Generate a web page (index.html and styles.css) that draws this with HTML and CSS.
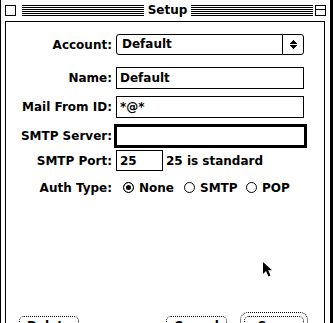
FILE: index.html
```html
<!DOCTYPE html>
<html lang="en">
<head>
    <meta charset="UTF-8">
    <meta name="viewport" content="width=device-width, initial-scale=1.0">
    <title>Setup</title>
    <link rel="stylesheet" href="styles.css">
</head>
<body>
<div class="window">
    <div class="titlebar">
        <span class="closebox"></span>
        <span class="stripes stripes-left"></span>
        <span class="title">Setup</span>
        <span class="stripes"></span>
        <svg class="zoombox" width="11" height="11" viewBox="0 0 11 11">
            <rect x="0.5" y="0.5" width="10" height="10" fill="#fff" stroke="#000"/>
            <line x1="0" y1="4.5" x2="11" y2="4.5" stroke="#000"/>
        </svg>
    </div>

    <div class="frame">
        <form class="setup">
            <div class="row row-account">
                <label class="lbl">Account:</label>
                <div class="popup">
                    <span class="popup-value">Default</span>
                    <span class="popup-arrows">
                        <svg width="7" height="9" viewBox="0 0 7 9">
                            <path d="M3 0h1v1h1v1h1v1h1v1H0V3h1V2h1V1h1z" fill="#000"/>
                            <path d="M0 5h7v1H6v1H5v1H4v1H3V8H2V7H1V6H0z" fill="#000"/>
                        </svg>
                    </span>
                </div>
            </div>

            <div class="row row-name">
                <label class="lbl" for="name">Name:</label>
                <input class="field" type="text" id="name" value="Default">
            </div>

            <div class="row row-mail">
                <label class="lbl" for="mailfrom">Mail From ID:</label>
                <input class="field" type="text" id="mailfrom" value="*@*">
            </div>

            <div class="row row-server">
                <label class="lbl" for="server">SMTP Server:</label>
                <input class="field field-focus" type="text" id="server" value="">
            </div>

            <div class="row row-port">
                <label class="lbl" for="port">SMTP Port:</label>
                <input class="field field-port" type="text" id="port" value="25">
                <span class="hint">25 is standard</span>
            </div>

            <div class="row row-auth">
                <span class="lbl">Auth Type:</span>
                <div class="radios">
                    <label class="opt opt-none"><input type="radio" name="auth" checked><span>None</span></label>
                    <label class="opt opt-smtp"><input type="radio" name="auth"><span>SMTP</span></label>
                    <label class="opt"><input type="radio" name="auth"><span>POP</span></label>
                </div>
            </div>
        </form>

        <div class="buttons">
            <button class="btn btn-delete" type="button">Delete</button>
            <button class="btn btn-cancel" type="button">Cancel</button>
            <div class="default-ring">
                <button class="btn" type="button">Save</button>
            </div>
        </div>

        <svg class="cursor" width="10" height="15" viewBox="0 0 10 15">
            <path d="M0 0V12L3 9L5.5 14.5L7.5 13.5L5.2 8.3H9Z" fill="#000"/>
        </svg>
    </div>
</div>
</body>
</html>
```

FILE: styles.css
```css
html, body{
    margin: 0;
    padding: 0;
    overflow: hidden;
    background: #fff;
}
body{
    font-family: "DejaVu Sans", "Liberation Sans", sans-serif;
    font-weight: bold;
    font-size: 12px;
    color: #000;
}
.window{
    width: 329px;
    height: 345px;
    border-left: 1px solid #000;
    border-right: 1px solid #000;
    box-shadow: 2px 0 0 #000;
}

/* title bar */
.titlebar{
    display: flex;
    align-items: center;
    height: 21px;
    padding: 0 4px;
}
.closebox{
    flex: none;
    width: 11px;
    height: 11px;
    box-sizing: border-box;
    border: 1px solid #000;
}
.stripes{
    flex: 1;
    height: 11px;
    background: repeating-linear-gradient(to bottom, #000 0 1px, #fff 1px 2px);
}
.stripes-left{
    margin-left: 6px;
}
.title{
    padding: 0 4px;
    line-height: 21px;
}
.zoombox{
    flex: none;
    display: block;
    margin-left: 2px;
}

/* content frame */
.frame{
    position: relative;
    margin-left: 4px;
    width: 320px;
    height: 330px;
    box-sizing: border-box;
    border: 1px solid #000;
}
.setup{
    padding-top: 12px;
}
.row{
    display: flex;
    align-items: center;
}
.lbl{
    flex: none;
    width: 106px;
    margin-right: 4px;
    text-align: right;
}
.row-account{ height: 21px; }
.row-name{ height: 22px; margin-top: 12px; }
.row-mail{ height: 22px; margin-top: 7px; }
.row-server{ height: 24px; margin-top: 6px; }
.row-port{ height: 21px; margin-top: 2px; }
.row-auth{ height: 15px; margin-top: 9px; }

.popup{
    display: flex;
    width: 188px;
    height: 21px;
    box-sizing: border-box;
    border: 1px solid #000;
    border-radius: 3px;
}
.popup-value{
    flex: 1;
    padding-left: 5px;
    line-height: 19px;
}
.popup-arrows{
    width: 20px;
    border-left: 1px solid #000;
    display: flex;
    align-items: center;
    justify-content: center;
}
.popup-arrows svg{
    display: block;
}

.field{
    width: 188px;
    height: 22px;
    box-sizing: border-box;
    margin: 0;
    padding: 0 3px;
    border: 1px solid #000;
    border-radius: 0;
    outline: none;
    font: inherit;
    color: #000;
    background: #fff;
}
.field-focus{
    width: 193px;
    height: 24px;
    margin-left: -2px;
    border-width: 3px;
}
.field-port{
    width: 47px;
    height: 21px;
}
.hint{
    margin-left: 3px;
}

.radios{
    display: flex;
    padding-left: 7px;
}
.opt{
    display: flex;
    align-items: center;
}
.opt-none{ width: 61px; }
.opt-smtp{ width: 62px; }
.opt input{
    appearance: none;
    -webkit-appearance: none;
    flex: none;
    width: 11px;
    height: 11px;
    margin: 0 5px 0 0;
    box-sizing: border-box;
    border: 1px solid #000;
    border-radius: 50%;
    background: #fff;
}
.opt input:checked{
    background: #000;
    box-shadow: inset 0 0 0 2px #fff;
}

/* bottom buttons */
.buttons{
    display: flex;
    align-items: flex-start;
    margin-top: 117px;
    padding-right: 16px;
}
.btn{
    height: 20px;
    margin: 0;
    padding: 0;
    border: 1px dotted #000;
    border-radius: 5px;
    background: #fff;
    font: inherit;
    color: #000;
    width: 60px;
}
.btn-delete{
    margin-left: 13px;
    margin-top: 4px;
}
.btn-cancel{
    width: 61px;
    margin-left: auto;
    margin-top: 4px;
}
.default-ring{
    margin-left: 13px;
    padding: 3px;
    border: 1px dotted #000;
    border-radius: 8px;
}
.default-ring .btn{
    display: block;
}

.cursor{
    position: absolute;
    left: 257px;
    top: 240px;
}
```
